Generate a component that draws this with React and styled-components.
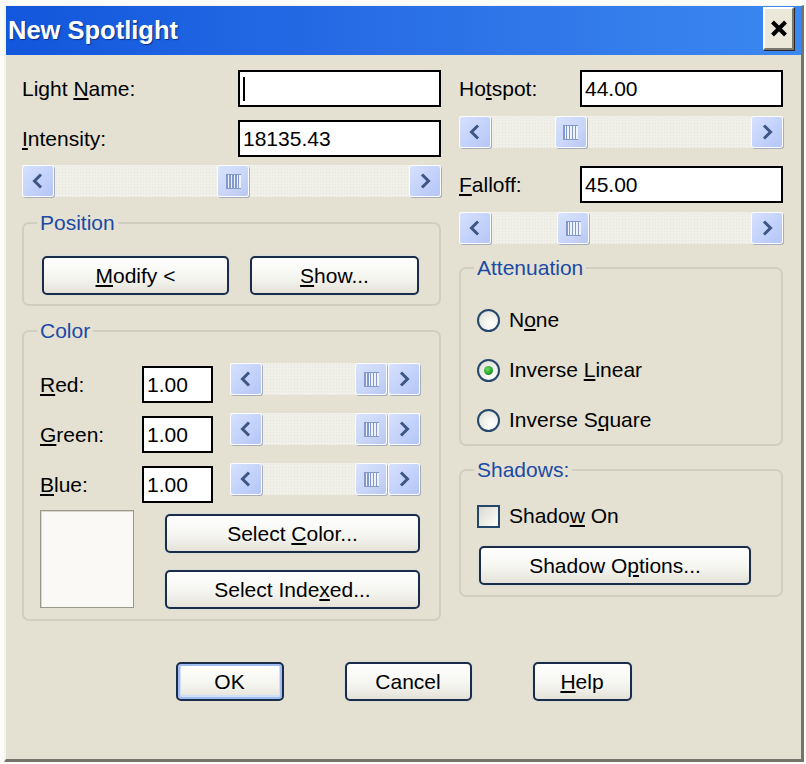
import React from 'react';
import styled, { createGlobalStyle } from 'styled-components';

const GlobalStyle = createGlobalStyle`
  html, body { margin: 0; padding: 0; background: #fbfbf8; }
  body { font-family: "Liberation Sans", Arial, sans-serif; color: #000; }
  * { box-sizing: border-box; }
`;

const Window = styled.div`
  width: 800px;
  height: 757px;
  margin: 5px 0 0 4px;
  border-top: 1px solid #f4f3ee;
  border-left: 2px solid #f4f3ee;
  border-right: 3px solid #75736a;
  border-bottom: 3px solid #75736a;
  display: flex;
  flex-direction: column;
  background: #e4e1d2;
`;

const TitleBar = styled.div`
  height: 49px;
  flex: none;
  display: flex;
  align-items: flex-start;
  justify-content: space-between;
  padding: 0 7px 0 2px;
  background: linear-gradient(90deg, #1257dc 0%, #2a6fe6 50%, #3b88f0 100%);
`;

const Title = styled.div`
  margin-top: 9px;
  font-family: "Liberation Sans", Arial, sans-serif;
  font-weight: bold;
  font-size: 25.5px;
  line-height: 30px;
  color: #fff;
  text-shadow: 1px 1px 1px #0b2d86;
`;

const CloseButton = styled.div`
  margin-top: 1px;
  width: 31px;
  height: 43px;
  background: #ebe8d9;
  border-top: 2px solid #ffffff;
  border-left: 2px solid #ffffff;
  border-right: 2px solid #7a786c;
  border-bottom: 2px solid #7a786c;
  box-shadow: 1px 1px 0 #2a2a2a;
  display: flex;
  align-items: center;
  justify-content: center;
`;

const Body = styled.div`
  flex: 1;
  padding: 15px 18px 0 16px;
  display: flex;
  flex-direction: column;
`;

const Columns = styled.div`
  display: grid;
  grid-template-columns: 419px 324px;
  column-gap: 18px;
  align-items: start;
`;

const Column = styled.div`
  display: flex;
  flex-direction: column;
`;

const FieldRow = styled.div`
  display: grid;
  grid-template-columns: ${(p) => p.$label}px 1fr;
  align-items: center;
  height: 37px;
  margin-top: ${(p) => p.$mt || 0}px;
`;

const Label = styled.div`
  font-size: 21px;
  line-height: 24px;
  white-space: nowrap;
  u { text-underline-offset: 2px; }
`;

const TextBox = styled.div`
  height: 37px;
  width: ${(p) => (p.$w ? `${p.$w}px` : 'auto')};
  margin-top: ${(p) => p.$mt || 0}px;
  border: 2px solid #000;
  background: #fff;
  font-size: 21px;
  padding: 0 3px;
  display: flex;
  align-items: center;
`;

const Caret = styled.span`
  display: block;
  width: 2px;
  height: 24px;
  background: #000;
`;

const ScrollBar = styled.div`
  display: flex;
  height: 32px;
  width: ${(p) => (p.$w ? `${p.$w}px` : 'auto')};
  margin-top: ${(p) => p.$mt || 0}px;
  margin-left: ${(p) => p.$ml || 0}px;
  background: #f0efe8;
  background-image: radial-gradient(#e6e5dc 0.6px, transparent 0.8px);
  background-size: 3px 3px;
`;

const ArrowButton = styled.div`
  width: 32px;
  height: 32px;
  flex: none;
  border-radius: 3px;
  border: 1px solid #fbfcff;
  background: linear-gradient(135deg, #d6e1fd 0%, #c3d2fb 55%, #b4c6f6 100%);
  box-shadow: 1px 1px 0 #a8aebb;
  display: flex;
  align-items: center;
  justify-content: center;
`;

const Track = styled.div`
  flex: 1;
  position: relative;
`;

const Thumb = styled.div`
  position: absolute;
  top: 0;
  width: 32px;
  height: 32px;
  border-radius: 3px;
  border: 1px solid #fbfcff;
  background: linear-gradient(135deg, #d9e3fc 0%, #c8d5f8 60%, #b9c8f0 100%);
  box-shadow: 1px 1px 0 #a8aebb;
  display: flex;
  align-items: center;
  justify-content: center;
`;

const Grip = styled.div`
  width: 15px;
  height: 15px;
  background: repeating-linear-gradient(90deg, #8399cc 0 1.5px, #eef2fd 1.5px 3px);
  border-top: 1px solid #8399cc;
  border-bottom: 1px solid #8399cc;
`;

const GroupBox = styled.fieldset`
  margin: ${(p) => p.$mt || 0}px 0 0 0;
  padding: ${(p) => p.$pad};
  border: 2px solid #d1cebf;
  border-radius: 7px;
  min-width: 0;
`;

const Legend = styled.legend`
  padding: 0 3px;
  margin-left: -3px;
  font-size: 21px;
  line-height: 24px;
  color: #1b4aa6;
`;

const Button = styled.div`
  width: ${(p) => p.$w}px;
  height: 39px;
  margin-top: ${(p) => p.$mt || 0}px;
  margin-left: ${(p) => p.$ml || 0}px;
  border: 2px solid #1a2c49;
  border-radius: 5px;
  background: linear-gradient(180deg, #ffffff 0%, #f4f4ef 60%, #e4e2d8 100%);
  box-shadow: ${(p) =>
    p.$default
      ? 'inset 0 0 0 2px #9fbdf2, inset 0 -1px 0 3px #cfe0fb'
      : '0 0 2px rgba(180, 205, 240, 0.7)'};
  font-size: 21px;
  display: flex;
  align-items: center;
  justify-content: center;
  white-space: nowrap;
  u { text-underline-offset: 2px; }
`;

const ButtonRow = styled.div`
  display: flex;
  gap: ${(p) => p.$gap}px;
  padding-left: ${(p) => p.$pl || 0}px;
`;

const ColorRows = styled.div`
  display: flex;
  flex-direction: column;
  gap: 10px;
`;

const ColorRow = styled.div`
  display: flex;
  align-items: flex-start;
  height: 40px;
`;

const RowLabel = styled(Label)`
  width: 102px;
  height: 37px;
  margin-top: 3px;
  display: flex;
  align-items: center;
`;

const ColorBottom = styled.div`
  display: flex;
  margin-top: 7px;
`;

const Preview = styled.div`
  width: 95px;
  height: 98px;
  border: 1px solid #9a988b;
  box-shadow: inset 1px 1px 0 #d8d6ca;
  background: #faf9f5;
`;

const ButtonColumn = styled.div`
  display: flex;
  flex-direction: column;
  gap: 17px;
  padding-top: 4px;
  margin-left: 31px;
`;

const OptionList = styled.div`
  display: flex;
  flex-direction: column;
  gap: 26px;
`;

const Option = styled.div`
  display: flex;
  align-items: center;
  gap: 9px;
  height: 24px;
  font-size: 21px;
  u { text-underline-offset: 2px; }
`;

const Radio = styled.span`
  width: 23px;
  height: 23px;
  flex: none;
  border-radius: 50%;
  border: 2px solid #24476b;
  background: radial-gradient(circle at 65% 70%, #ffffff 0%, #f1f1ec 45%, #d9d8cf 100%);
  display: flex;
  align-items: center;
  justify-content: center;
  &::after {
    content: '';
    display: ${(p) => (p.$checked ? 'block' : 'none')};
    width: 9px;
    height: 9px;
    border-radius: 50%;
    background: radial-gradient(circle at 40% 35%, #6fdc6f 0%, #27a827 55%, #157015 100%);
  }
`;

const Checkbox = styled.span`
  width: 23px;
  height: 23px;
  flex: none;
  border: 2px solid #24476b;
  background: linear-gradient(135deg, #d9d8cf 0%, #f0f0ea 60%, #ffffff 100%);
`;

const Footer = styled.div`
  margin-top: 41px;
  display: flex;
  justify-content: center;
  gap: 61px;
  padding-left: 2px;
`;

const Chevron = ({ dir }) => (
  <svg width="14" height="16" viewBox="0 0 14 16">
    <path
      d={dir === 'left' ? 'M10 1.5 L3.5 8 L10 14.5' : 'M4 1.5 L10.5 8 L4 14.5'}
      fill="none"
      stroke="#3e5685"
      strokeWidth="3"
      strokeLinejoin="miter"
    />
  </svg>
);

const Scroll = ({ pos, ...rest }) => (
  <ScrollBar {...rest}>
    <ArrowButton>
      <Chevron dir="left" />
    </ArrowButton>
    <Track>
      <Thumb style={{ left: `calc(${pos} * (100% - 32px))` }}>
        <Grip />
      </Thumb>
    </Track>
    <ArrowButton>
      <Chevron dir="right" />
    </ArrowButton>
  </ScrollBar>
);

const colorRows = [
  { key: 'R', rest: 'ed:' },
  { key: 'G', rest: 'reen:' },
  { key: 'B', rest: 'lue:' },
];

export default function App() {
  return (
    <>
      <GlobalStyle />
      <Window>
        <TitleBar>
          <Title>New Spotlight</Title>
          <CloseButton>
            <svg width="18" height="17" viewBox="0 0 18 17">
              <path d="M2.5 2 L15.5 15 M15.5 2 L2.5 15" stroke="#000" strokeWidth="4" />
            </svg>
          </CloseButton>
        </TitleBar>
        <Body>
          <Columns>
            <Column>
              <FieldRow $label={216}>
                <Label>
                  Light <u>N</u>ame:
                </Label>
                <TextBox>
                  <Caret />
                </TextBox>
              </FieldRow>
              <FieldRow $label={216} $mt={13}>
                <Label>
                  <u>I</u>ntensity:
                </Label>
                <TextBox>18135.43</TextBox>
              </FieldRow>
              <Scroll pos={0.506} $mt={8} />

              <GroupBox $mt={14} $pad="21px 20px 9px 16px">
                <Legend>Position</Legend>
                <ButtonRow $gap={21} $pl={2}>
                  <Button $w={187}>
                    <span>
                      <u>M</u>odify &lt;
                    </span>
                  </Button>
                  <Button $w={169}>
                    <span>
                      <u>S</u>how...
                    </span>
                  </Button>
                </ButtonRow>
              </GroupBox>

              <GroupBox $mt={13} $pad="20px 19px 10px 16px">
                <Legend>Color</Legend>
                <ColorRows>
                  {colorRows.map((r) => (
                    <ColorRow key={r.key}>
                      <RowLabel>
                        <span>
                          <u>{r.key}</u>
                          {r.rest}
                        </span>
                      </RowLabel>
                      <TextBox $w={71} $mt={3}>
                        1.00
                      </TextBox>
                      <Scroll pos={0.99} $w={190} $ml={17} />
                    </ColorRow>
                  ))}
                </ColorRows>
                <ColorBottom>
                  <Preview />
                  <ButtonColumn>
                    <Button $w={255}>
                      <span>
                        Select <u>C</u>olor...
                      </span>
                    </Button>
                    <Button $w={255}>
                      <span>
                        Select Inde<u>x</u>ed...
                      </span>
                    </Button>
                  </ButtonColumn>
                </ColorBottom>
              </GroupBox>
            </Column>

            <Column>
              <FieldRow $label={121}>
                <Label>
                  Ho<u>t</u>spot:
                </Label>
                <TextBox>44.00</TextBox>
              </FieldRow>
              <Scroll pos={0.28} $mt={9} />
              <FieldRow $label={121} $mt={18}>
                <Label>
                  <u>F</u>alloff:
                </Label>
                <TextBox>45.00</TextBox>
              </FieldRow>
              <Scroll pos={0.29} $mt={9} />

              <GroupBox $mt={12} $pad="28px 16px 12px 16px">
                <Legend>Attenuation</Legend>
                <OptionList>
                  <Option>
                    <Radio />
                    <span>
                      N<u>o</u>ne
                    </span>
                  </Option>
                  <Option>
                    <Radio $checked />
                    <span>
                      Inverse <u>L</u>inear
                    </span>
                  </Option>
                  <Option>
                    <Radio />
                    <span>
                      Inverse S<u>q</u>uare
                    </span>
                  </Option>
                </OptionList>
              </GroupBox>

              <GroupBox $mt={12} $pad="22px 16px 10px 16px">
                <Legend>Shadows:</Legend>
                <Option>
                  <Checkbox />
                  <span>
                    Shado<u>w</u> On
                  </span>
                </Option>
                <Button $w={272} $mt={18} $ml={2}>
                  <span>
                    Shadow O<u>p</u>tions...
                  </span>
                </Button>
              </GroupBox>
            </Column>
          </Columns>

          <Footer>
            <Button $w={108} $default>
              OK
            </Button>
            <Button $w={127}>Cancel</Button>
            <Button $w={99}>
              <span>
                <u>H</u>elp
              </span>
            </Button>
          </Footer>
        </Body>
      </Window>
    </>
  );
}
